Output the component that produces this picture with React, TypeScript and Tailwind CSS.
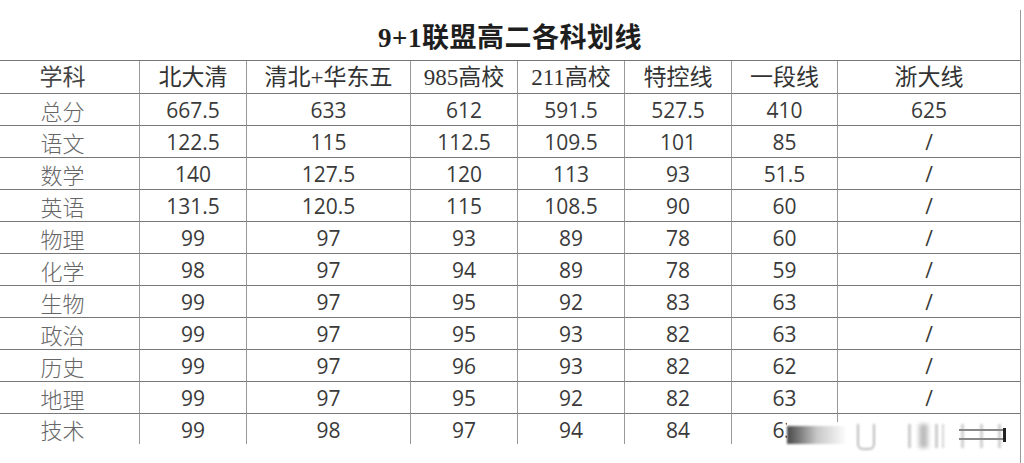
import React from "react";

const headers = ["学科", "北大清", "清北+华东五", "985高校", "211高校", "特控线", "一段线", "浙大线"];

const rows = [
  ["总分", "667.5", "633", "612", "591.5", "527.5", "410", "625"],
  ["语文", "122.5", "115", "112.5", "109.5", "101", "85", "/"],
  ["数学", "140", "127.5", "120", "113", "93", "51.5", "/"],
  ["英语", "131.5", "120.5", "115", "108.5", "90", "60", "/"],
  ["物理", "99", "97", "93", "89", "78", "60", "/"],
  ["化学", "98", "97", "94", "89", "78", "59", "/"],
  ["生物", "99", "97", "95", "92", "83", "63", "/"],
  ["政治", "99", "97", "95", "93", "82", "63", "/"],
  ["历史", "99", "97", "96", "93", "82", "62", "/"],
  ["地理", "99", "97", "95", "92", "82", "63", "/"],
  ["技术", "99", "98", "97", "94", "84", "63", "/"],
];

const serif = "font-['Liberation_Serif','Noto_Sans_CJK_SC',serif]";

// blurred watermark sitting over the last row, bottom right
const Watermark = () => (
  <div className="absolute left-[787px] top-[422px] w-[224px] h-[30px] bg-white flex items-start pt-[2px]">
    <div className="w-[60px] h-[18px] mt-[2px] bg-gradient-to-r from-[#4a4a4a] via-[#c8c8c8] to-white blur-[1px]" />
    <div className="ml-[10px] w-[18px] h-[26px] border-2 border-t-0 border-[#bbb] rounded-b-md blur-[1px]" />
    <div className="ml-[33px] w-[3px] h-[24px] bg-[#ccc] blur-[1px]" />
    <div className="ml-[8px] w-[9px] h-[24px] bg-[#bdbdbd] blur-[2px]" />
    <div className="ml-[7px] w-[3px] h-[24px] bg-[#ccc] blur-[1px]" />
    <div className="ml-[4px] w-[2px] h-[24px] bg-[#d4d4d4] blur-[1px]" />
    <div className="ml-[15px] w-[44px] h-[24px] flex flex-col gap-[7px] pt-[5px] relative">
      <div className="absolute inset-0 flex justify-between px-[2px]">
        <div className="w-[3px] bg-[#d0d0d0] blur-[1px]" />
        <div className="w-[3px] bg-[#d0d0d0] blur-[1px]" />
        <div className="w-[3px] bg-[#d0d0d0] blur-[1px]" />
      </div>
      <div className="relative h-[2px] bg-[#888] blur-[0.5px]" />
      <div className="relative h-[2px] bg-[#888] blur-[0.5px]" />
    </div>
    <div className="mt-[4px] w-[3px] h-[14px] bg-[#222]" />
  </div>
);

export default function App() {
  return (
    <div className="relative w-[1024px] h-[463px] bg-white overflow-hidden">
      <div className="pt-[10px]">
        <div className="w-[1021px] h-[453px] border-r border-[#999]">
          <div className="h-[50px] flex items-center justify-center pt-[6px]">
            <h1 className={`${serif} font-bold text-[27px] text-[#1e1e1e] tracking-[0.5px]`}>9+1联盟高二各科划线</h1>
          </div>
          <div className="grid grid-cols-[140px_107px_164px_107px_107px_107px_106px_182px] border-t border-[#777]">
            {headers.map((h, i) => (
              <div
                key={h}
                className={`h-[33px] flex items-center justify-center border-b border-[#777] ${i < 7 ? "border-r border-r-[#999]" : ""} ${i === 0 ? "pr-[14px] text-[#444]" : "text-[#333]"} ${serif} text-[23px] leading-none`}
              >
                {h}
              </div>
            ))}
            {rows.map((r, ri) =>
              r.map((c, ci) => (
                <div
                  key={ri + "-" + ci}
                  className={`${ri === rows.length - 1 ? "h-[30px]" : "h-[32px] border-b border-[#777]"} flex items-center justify-center ${ci < 7 ? "border-r border-r-[#999]" : ""} ${
                    ci === 0
                      ? "pr-[14px] font-['Noto_Sans_CJK_SC',sans-serif] font-light text-[22px] text-[#666]"
                      : "font-['Open_Sans',sans-serif] text-[21px] text-[#3a3a3a] pt-[2px]"
                  } leading-none`}
                >
                  {c}
                </div>
              ))
            )}
          </div>
        </div>
      </div>
      <Watermark />
    </div>
  );
}
